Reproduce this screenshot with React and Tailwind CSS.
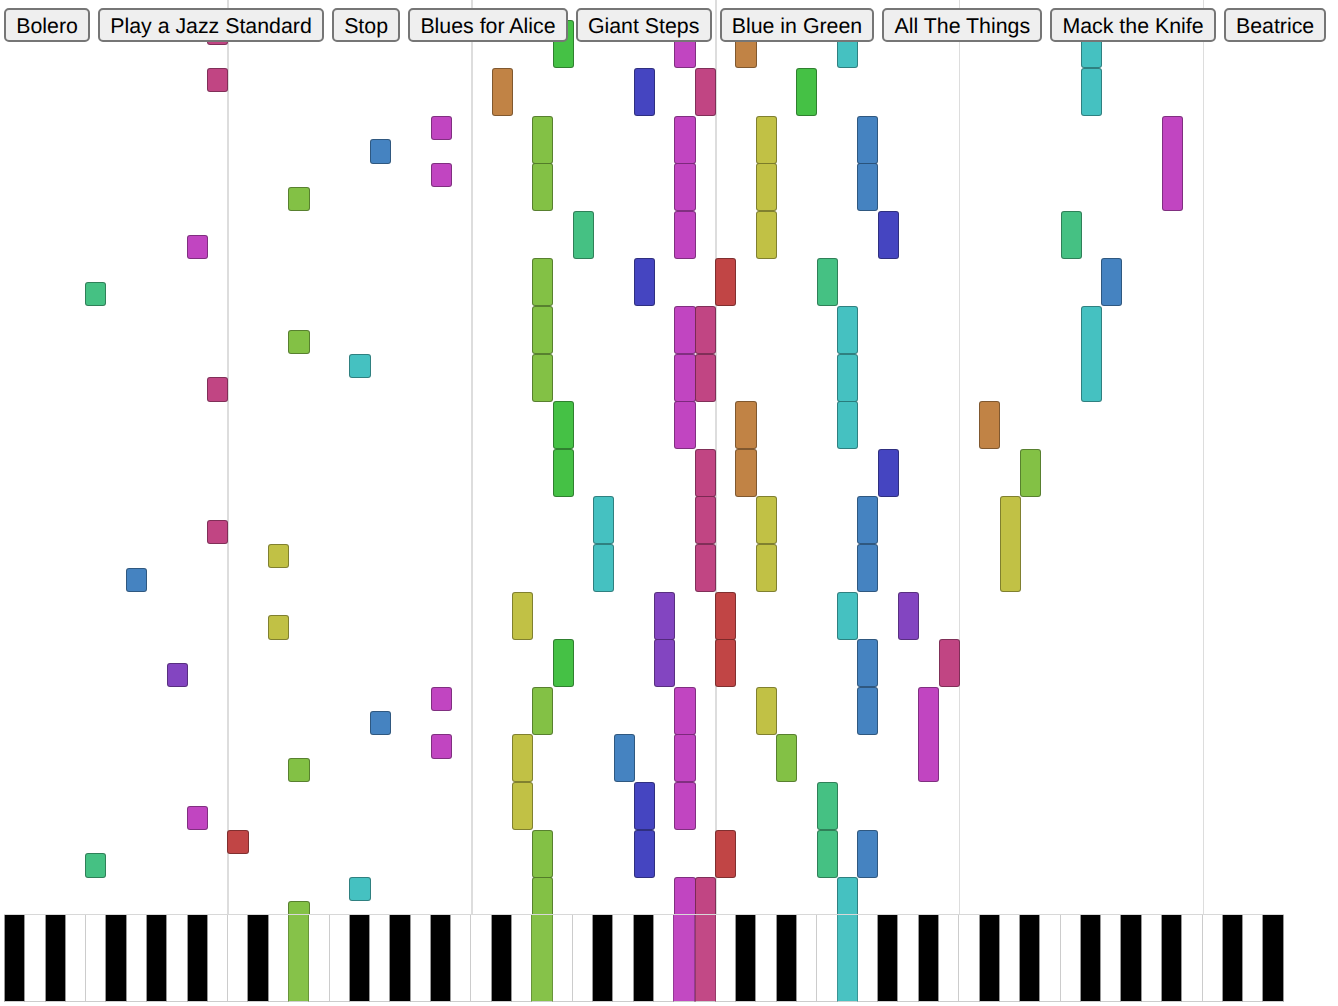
const SONGS = ['Bolero', 'Play a Jazz Standard', 'Stop', 'Blues for Alice', 'Giant Steps', 'Blue in Green', 'All The Things', 'Mack the Knife', 'Beatrice'];

const COLORS = ['bg-[#bf8040]', 'bg-[#bfbf40]', 'bg-[#80bf40]', 'bg-[#40bf40]', 'bg-[#40bf80]', 'bg-[#40bfbf]', 'bg-[#4080bf]', 'bg-[#4040bf]', 'bg-[#8040bf]', 'bg-[#bf40bf]', 'bg-[#bf4080]', 'bg-[#bf4040]'];

const KEY_W = 1280 / 63;
const STEP = 23.8;
const TOP = 68;

// step: [[pitch, length in steps], ...]
const SCORE = [
  [-2, [[10, 1], [27, 2], [33, 2], [36, 2], [41, 2], [53, 2]]],
  [0, [[10, 1], [24, 2], [31, 2], [34, 2], [39, 2], [53, 2]]],
  [2, [[21, 1], [26, 2], [33, 2], [37, 2], [42, 2], [57, 4]]],
  [3, [[18, 1]]],
  [4, [[21, 1], [26, 2], [33, 2], [37, 2], [42, 2]]],
  [5, [[14, 1]]],
  [6, [[28, 2], [33, 2], [37, 2], [43, 2], [52, 2]]],
  [7, [[9, 1]]],
  [8, [[26, 2], [31, 2], [35, 2], [40, 2], [54, 2]]],
  [9, [[4, 1]]],
  [10, [[26, 2], [33, 2], [34, 2], [41, 2], [53, 4]]],
  [11, [[14, 1]]],
  [12, [[17, 1], [26, 2], [33, 2], [34, 2], [41, 2]]],
  [13, [[10, 1]]],
  [14, [[27, 2], [33, 2], [36, 2], [41, 2], [48, 2]]],
  [16, [[27, 2], [34, 2], [36, 2], [43, 2], [50, 2]]],
  [18, [[29, 2], [34, 2], [37, 2], [42, 2], [49, 4]]],
  [19, [[10, 1]]],
  [20, [[13, 1], [29, 2], [34, 2], [37, 2], [42, 2]]],
  [21, [[6, 1]]],
  [22, [[25, 2], [32, 2], [35, 2], [41, 2], [44, 2]]],
  [23, [[13, 1]]],
  [24, [[27, 2], [32, 2], [35, 2], [42, 2], [46, 2]]],
  [25, [[8, 1]]],
  [26, [[21, 1], [26, 2], [33, 2], [37, 2], [42, 2], [45, 4]]],
  [27, [[18, 1]]],
  [28, [[21, 1], [25, 2], [30, 2], [33, 2], [38, 2]]],
  [29, [[14, 1]]],
  [30, [[25, 2], [31, 2], [33, 2], [40, 2]]],
  [31, [[9, 1]]],
  [32, [[11, 1], [26, 2], [31, 2], [35, 2], [40, 2], [42, 2]]],
  [33, [[4, 1]]],
  [34, [[17, 1], [26, 2], [33, 2], [34, 2], [41, 2]]],
  [35, [[14, 2]]],
];

const NOTES = SCORE.flatMap(([step, notes]) => notes.map(([pitch, len]) => ({ step, pitch, len })));

const OCTAVE_LINES = [11, 23, 35, 47, 59];
const BLACK = [0, 2, 5, 7, 9];
const ACTIVE = [14, 26, 33, 34, 41];

const isBlack = (pitch) => BLACK.includes(pitch % 12);

const PianoKey = ({ pitch }) => {
  const next = pitch + 1;
  let cls = '';
  if (ACTIVE.includes(pitch)) cls = `${COLORS[pitch % 12]} border-x border-black/25 opacity-95`;
  else if (isBlack(pitch)) cls = 'bg-black border-x border-[#999]';
  else if (!isBlack(next) && next < 63) cls = 'border-r border-r-[#ccc]';
  return <div className={`min-w-0 flex-1 border-b border-b-[#ccc] ${cls}`} />;
};

export default function App() {
  return (
    <div className="flex h-[1006px] w-[1338px] flex-col overflow-hidden bg-white font-['Liberation_Sans',Arial,sans-serif]">
      <div className="relative h-[914px] shrink-0 overflow-hidden">
        <div className="relative z-20 flex gap-2 pl-1 pt-2">
          {SONGS.map((song) => (
            <button key={song} className="h-[34px] shrink-0 rounded-[5px] border-2 border-[#767676] bg-[#efefef] px-[10.2px] pt-[4px] text-[21.33px] leading-none text-black [text-rendering:geometricPrecision]">
              {song}
            </button>
          ))}
        </div>

        {OCTAVE_LINES.map((pitch) => (
          <div key={pitch} className="absolute bottom-0 top-0 w-[1.5px] bg-[#ddd]" style={{ left: 4 + pitch * KEY_W }} />
        ))}
        {NOTES.map((n, i) => (
          <div
            key={i}
            className={`absolute rounded-[3px] border border-black/35 opacity-[.97] ${COLORS[n.pitch % 12]}`}
            style={{ left: 4 + n.pitch * KEY_W, top: TOP + n.step * STEP, width: KEY_W + 0.8, height: n.len * STEP + 0.4 }}
          />
        ))}
      </div>

      <div className="ml-1 flex h-[88px] w-[1280px] border-t border-t-[#d8d8d8]">
        {Array.from({ length: 63 }, (_, pitch) => (
          <PianoKey key={pitch} pitch={pitch} />
        ))}
      </div>
    </div>
  );
}
